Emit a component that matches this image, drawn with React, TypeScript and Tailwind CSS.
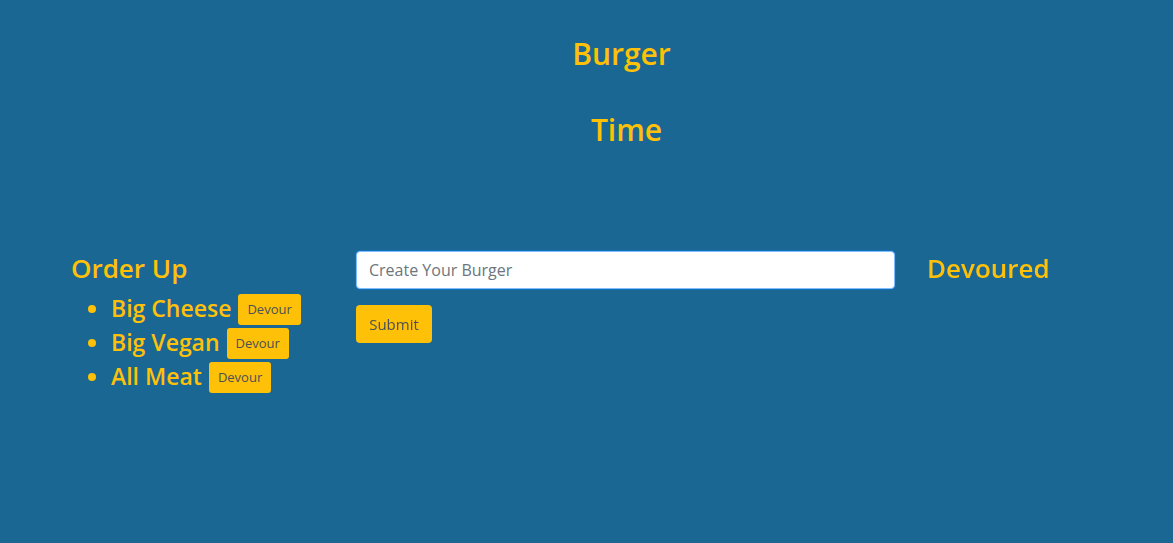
import React from "react";

const font = { fontFamily: '"Open Sans", "Noto Sans", sans-serif' };

export default function App() {
  const items = ["Big Cheese", "Big Vegan", "All Meat"];
  return (
    <div className="min-h-[543px] w-full bg-[#1b6794] text-[#ffc107]" style={font}>
      <div className="flex flex-col items-center pt-[33px] pl-[70px]">
        <h2 className="text-[30px] font-semibold leading-[42px] h-[42px]">Burger</h2>
        <h2 className="mt-[34px] pl-[10px] text-[30px] font-semibold leading-[42px] h-[42px]">Time</h2>
      </div>
      <div className="mt-[98px] flex pl-[71px]">
        <div className="w-[285px]">
          <h3 className="text-[26px] font-semibold leading-[38px] h-[38px] mb-[3px]">Order Up</h3>
          <ul className="list-disc pl-[40px]">
            {items.map((it) => (
              <li key={it} className="h-[34px] text-[23px] font-semibold leading-[34px]">
                <span className="inline-flex items-center">
                  {it}
                  <button className="ml-[7px] mt-[4px] h-[31px] rounded-[3px] bg-[#ffc107] px-[9px] text-[13px] font-normal leading-[31px] text-[#495057]">
                    Devour
                  </button>
                </span>
              </li>
            ))}
          </ul>
        </div>
        <div className="w-[539px] pt-[2px]">
          <input
            autoFocus
            className="h-[38px] w-full rounded-[4px] border border-[#80bdff] bg-white px-[12px] text-[16px] text-[#495057] shadow-[0_0_0_1px_rgba(0,123,255,0.35)] outline-none placeholder:text-[#6c757d]"
            placeholder="Create Your Burger"
          />
          <button className="mt-[16px] h-[38px] w-[76px] rounded-[4px] bg-[#ffc107] text-[15px] text-[#495057]">
            Submit
          </button>
        </div>
        <div className="ml-[32px]">
          <h3 className="text-[26px] font-semibold leading-[38px] h-[38px]">Devoured</h3>
        </div>
      </div>
    </div>
  );
}
